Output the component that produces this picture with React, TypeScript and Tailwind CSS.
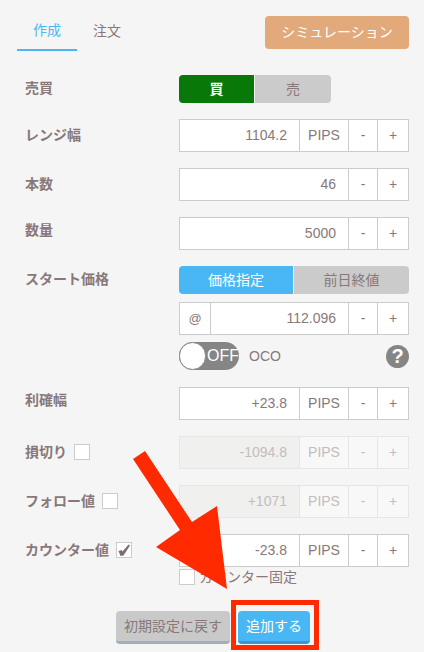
import React from "react";

const font = { fontFamily: '"Liberation Sans","Noto Sans CJK JP",sans-serif' };

function Cell({ w, children, disabled }: { w: string; children: React.ReactNode; disabled?: boolean }) {
  return (
    <div className={`${w} flex items-center justify-center border-l ${disabled ? "border-[#e6e6e6] text-[#c4bcbd]" : "border-[#cccccc]"}`}>
      {children}
    </div>
  );
}

function Field({ value, pips = true, disabled, prefix }: { value: string; pips?: boolean; disabled?: boolean; prefix?: boolean }) {
  return (
    <div className={`flex h-[33px] w-[230px] border text-[14px] ${disabled ? "border-[#e6e6e6] bg-[#f8f8f8] text-[#c4bcbd]" : "border-[#cccccc] bg-white text-[#887879]"}`}>
      {prefix && <div className="flex w-[30px] items-center justify-center text-[13px]">@</div>}
      <div className={`flex flex-1 items-center justify-end pr-[12px] ${prefix ? "border-l border-[#cccccc]" : ""} ${disabled ? "bg-[#f0f0ee]" : ""}`}>
        {value}
      </div>
      {pips && <Cell w="w-[49px]" disabled={disabled}>PIPS</Cell>}
      <Cell w="w-[29px]" disabled={disabled}>-</Cell>
      <Cell w="w-[31px]" disabled={disabled}>+</Cell>
    </div>
  );
}

function Box({ checked, className = "" }: { checked?: boolean; className?: string }) {
  return (
    <div className={`flex h-[16px] w-[16px] shrink-0 items-center justify-center border border-[#cccccc] bg-white ${className}`}>
      {checked && (
        <svg width="14" height="14" viewBox="0 0 14 14">
          <polygon points="1.5,8 4.5,7 5.5,8.5 11.5,1.5 13,2.5 6.5,12.5 3.5,13" fill="#7d6f70" />
        </svg>
      )}
    </div>
  );
}

function Row({ label, mt, pad, box, children }: { label: string; mt: string; pad: string; box?: "on" | "off"; children: React.ReactNode }) {
  return (
    <div className={`flex items-start ${mt}`}>
      <div className={`flex w-[179px] shrink-0 items-center gap-[7px] pl-[25px] text-[14px] font-bold leading-[20px] text-[#887879] ${pad}`}>
        <span>{label}</span>
        {box && <Box checked={box === "on"} />}
      </div>
      <div className="w-[230px]">{children}</div>
    </div>
  );
}

export default function App() {
  return (
    <div style={font} className="relative h-[652px] w-[424px] overflow-hidden bg-[#f5f5f5] pt-[16px] text-[#887879]">
      <div className="flex items-start justify-between pl-[17px] pr-[15px]">
        <div className="flex text-[14px]">
          <div className="flex h-[35px] w-[60px] items-center justify-center border-b-2 border-[#4ab7f5] pb-[4px] text-[#4ab7f5]">作成</div>
          <div className="flex h-[35px] w-[60px] items-center justify-center pb-[4px]">注文</div>
        </div>
        <div className="flex h-[33px] w-[144px] items-center justify-center rounded-[4px] bg-[#e2a97a] text-[14px] text-white">シミュレーション</div>
      </div>

      <Row label="売買" mt="mt-[24px]" pad="pt-[3px]">
        <div className="flex h-[28px] w-[152px] text-[14px]">
          <div className="flex w-[75px] items-center justify-center rounded-l-[4px] bg-[#087808] font-bold text-white">買</div>
          <div className="ml-px flex flex-1 items-center justify-center rounded-r-[4px] bg-[#cbcbcb]">売</div>
        </div>
      </Row>
      <Row label="レンジ幅" mt="mt-[16px]" pad="pt-[6px]"><Field value="1104.2" /></Row>
      <Row label="本数" mt="mt-[16px]" pad="pt-[6px]"><Field value="46" pips={false} /></Row>
      <Row label="数量" mt="mt-[16px]" pad="pt-[3px]"><Field value="5000" pips={false} /></Row>
      <Row label="スタート価格" mt="mt-[16px]" pad="pt-[3px]">
        <div className="flex h-[28px] w-[230px] text-[14px]">
          <div className="flex w-[114px] items-center justify-center rounded-l-[4px] bg-[#4ab7f5] text-white">価格指定</div>
          <div className="ml-px flex flex-1 items-center justify-center rounded-r-[4px] bg-[#cbcbcb]">前日終値</div>
        </div>
        <div className="mt-[8px]"><Field value="112.096" pips={false} prefix /></div>
        <div className="mt-[7px] flex h-[28px] items-center">
          <div className="relative flex h-[28px] w-[60px] items-center justify-end rounded-full bg-[#858585] text-[16px] text-white">
            OFF
            <div className="absolute left-0 top-0 h-[28px] w-[27px] rounded-full border border-[#858585] bg-white" />
          </div>
          <span className="ml-[10px] text-[14px]">OCO</span>
          <div className="ml-auto flex h-[23px] w-[23px] items-center justify-center rounded-full bg-[#858585] text-[20px] font-bold text-white">?</div>
        </div>
      </Row>
      <Row label="利確幅" mt="mt-[17px]" pad="pt-[3px]"><Field value="+23.8" /></Row>
      <Row label="損切り" mt="mt-[16px]" pad="pt-[6px]" box="off"><Field value="-1094.8" disabled /></Row>
      <Row label="フォロー値" mt="mt-[16px]" pad="pt-[6px]" box="off"><Field value="+1071" disabled /></Row>
      <Row label="カウンター値" mt="mt-[16px]" pad="pt-[6px]" box="on"><Field value="-23.8" /></Row>
      <div className="mt-[2px] flex items-center gap-[4px] pl-[179px] text-[14px] leading-[16px]">
        <Box />
        <span>カウンター固定</span>
      </div>
      <div className="mt-[26px] flex pl-[116px]">
        <div className="flex h-[33px] w-[114px] items-center justify-center rounded-[4px] border-b-[3px] border-[#a5adb8] bg-[#c9c9c9] text-[14px]">初期設定に戻す</div>
        <div className="ml-[8px] flex h-[33px] w-[72px] items-center justify-center rounded-[4px] border-b-[3px] border-[#3d95c9] bg-[#4ab7f5] text-[14px] text-white">追加する</div>
      </div>

      <div className="absolute left-[231px] top-[600px] h-[50px] w-[88px] border-[5px] border-[#ff2a00]" />
      <svg className="absolute left-0 top-0" width="424" height="652" viewBox="0 0 424 652">
        <polygon points="145,451 192,522 217,506 227,589 156,547 180,530 133,459" fill="#ff2a00" />
      </svg>
    </div>
  );
}
